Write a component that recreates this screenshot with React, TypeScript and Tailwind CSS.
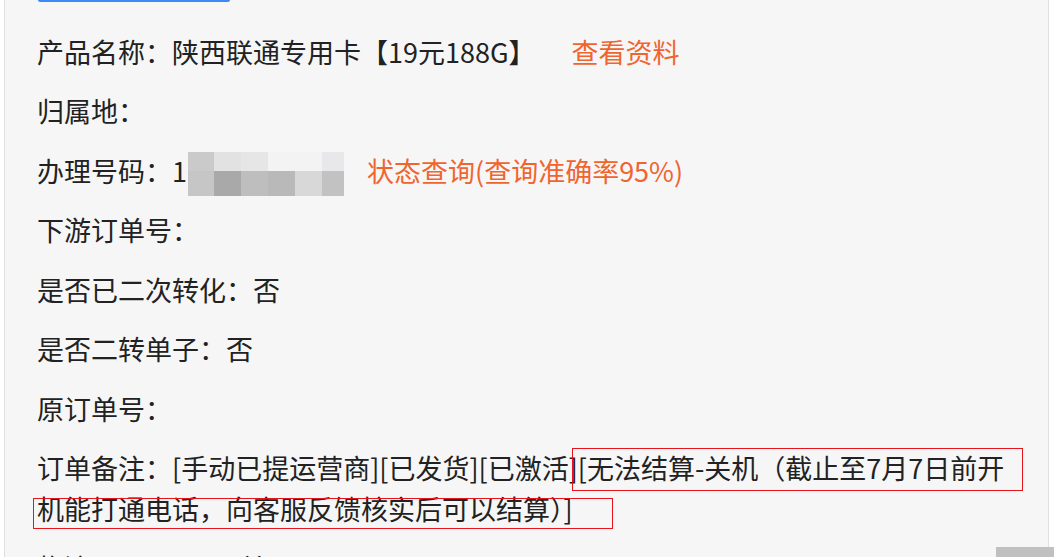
import React from 'react';

// mosaic cells covering the phone number
const topRow = ['#cacaca', '#e2e2e2', '#e6e6e6', '#f3f3f3', '#f3f3f3', '#e8e8ea'];
const bottomRow = ['#c6c6c6', '#a9a9a9', '#bebebe', '#b9b9b9', '#d8d8d8', '#c2c2c2'];
const cellWidths = ['w-[26px]', 'w-[27px]', 'w-[27px]', 'w-[27px]', 'w-[27px]', 'w-[22px]'];

function Mosaic() {
  return (
    <span className="inline-flex flex-col align-middle mx-[1px] -mt-[3px] -mb-[3px]">
      <span className="flex h-[19px]">
        {topRow.map((c, i) => (
          <span key={i} className={`${cellWidths[i]} h-full`} style={{ backgroundColor: c }} />
        ))}
      </span>
      <span className="flex h-[25px]">
        {bottomRow.map((c, i) => (
          <span key={i} className={`${cellWidths[i]} h-full`} style={{ backgroundColor: c }} />
        ))}
      </span>
    </span>
  );
}

export default function App() {
  return (
    <div
      className="relative w-[1054px] h-[557px] overflow-hidden bg-white text-[#222]"
      style={{ fontFamily: '"Noto Sans CJK SC", "Noto Sans", sans-serif' }}
    >
      <div className="ml-[4px] w-[1045px] h-full border-x border-[#e0e0e0] bg-[#f6f6f6]">
        <div className="ml-[33px] w-[192px] h-[2px] rounded-b-sm bg-[#3e8af5]" />

        <div className="flex flex-col gap-[18.5px] pl-[32px] pt-[28.5px] text-[27px] leading-[41px]">
          <p className="h-[41px] whitespace-nowrap">
            产品名称：陕西联通专用卡【19元188G】
            <span className="ml-[36px] text-[#f0652f]">查看资料</span>
          </p>
          <p className="h-[41px]">归属地：</p>
          <p className="h-[41px] whitespace-nowrap">
            办理号码：1<Mosaic />
            <span className="ml-[22px] text-[#f0652f]">状态查询(查询准确率95%)</span>
          </p>
          <p className="h-[41px]">下游订单号：</p>
          <p className="h-[41px]">是否已二次转化：否</p>
          <p className="h-[41px]">是否二转单子：否</p>
          <p className="h-[41px]">原订单号：</p>
          <p className="h-[82px] whitespace-nowrap">
            订单备注：[手动已提运营商][已发货][已激活][无法结算-关机（截止至7月7日前开
            <br />
            机能打通电话，向客服反馈核实后可以结算）]
          </p>
          <p className="h-[41px] -mt-[1px]">物流公司：　　　单号：</p>
        </div>
      </div>

      {/* red annotation boxes */}
      <div className="absolute left-[572px] top-[448px] w-[451px] h-[43px] border border-[#e8141c]" />
      <div className="absolute left-[33px] top-[498px] w-[580px] h-[31px] border border-[#e8141c]" />

      {/* floating grey tab at the bottom right */}
      <div className="absolute left-[996px] top-[547px] w-[58px] h-[10px] bg-[#c0c0c0]" />
    </div>
  );
}
